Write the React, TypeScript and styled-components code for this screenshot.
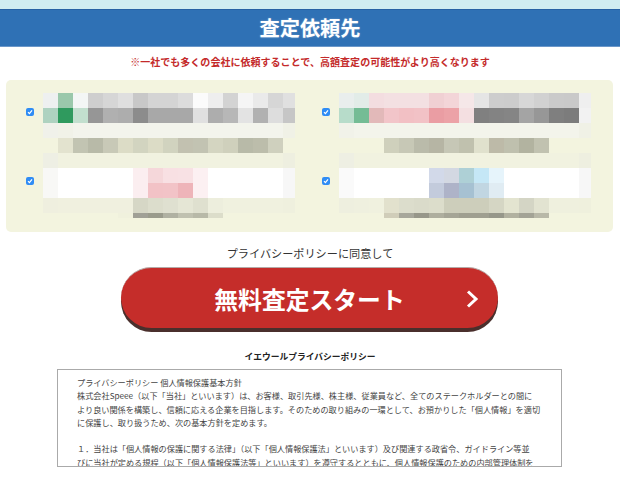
import styled, { createGlobalStyle } from 'styled-components';

const BG = 'f3f4df';
const W = 'ffffff';

const COMPANIES: { checkTop: number; height: number; rows: string[][] }[] = [
  {
    checkTop: 15,
    height: 75,
    rows: [
      ['eef0f0', '9ac8ab', 'f3f6f5', 'cecece', 'd6d6d6', 'dfdfdf', 'c8c8c8', 'd4d4d4', 'd4d4d4', 'dcdcdc', 'fbfbfb', 'eeeeee', 'd3d3d3', 'f5f5f5', 'eaeaea', 'd6d6d6', 'e0e0e0'],
      ['aed2c0', '2f9a5e', 'c2dfce', '969696', 'b0b0b0', 'adadad', '8c8c8c', 'a8a8a8', 'a8a8a8', 'a8a8a8', 'e0e0e0', 'adadad', 'b7b7b7', 'e3e3e3', 'b1b1b1', 'dddddd', 'c6c6c6'],
      ['f0f1ea', 'f1f2e8', 'f3f4ec', 'f3f4ec', 'f3f4ec', 'f3f4ec', 'f3f4ec', 'f3f4ec', 'f3f4ec', 'f3f4ec', 'f3f4ec', 'f3f4ec', 'f3f4ec', 'f3f4ec', 'f3f4ec', 'f3f4ec', 'f0f1e6'],
      [BG, 'e3e3cf', 'c2c4b2', 'b8baa8', 'c8c9b7', 'dcdcc6', 'd2d4c0', 'dcdcc6', 'd1d3bf', 'c2c1b0', 'c2c3b2', 'd4d5c1', 'cfd0bc', 'b8baa8', 'bcbdab', 'cfd0be', BG],
      ['eeefe4', 'f1f2e0', 'f1f2e0', 'f1f2e0', 'f1f2e0', 'f1f2e0', 'f1f2e0', 'f1f2e0', 'f1f2e0', 'f1f2e0', 'f1f2e0', 'f1f2e0', 'f1f2e0', 'f1f2e0', 'f1f2e0', 'f1f2e0', 'eeefe0'],
    ],
  },
  {
    checkTop: 15,
    height: 75,
    rows: [
      ['e9eeed', 'e2ece8', 'f3dde0', 'f3e0e2', 'f3e0e2', 'f3e0e2', 'f0d0d3', 'f3d5d8', 'f5e7e8', 'e5e5e5', 'cdcdcd', 'cccccc', 'd7d7d7', 'd1d1d1', 'cacaca', 'c9c9c9', 'efefef'],
      ['b7dcca', '74bc95', 'e2b9b9', 'f2c5c9', 'f2c0c4', 'f2c2c6', 'ea9da3', 'eca2a7', 'f4dfe1', '808080', '838383', '858585', 'a4a4a4', '979797', '7f7f7f', '7c7c7c', 'f2f2f2'],
      ['f1f2e9', 'f3f4eb', 'f3f4eb', 'f3f4eb', 'f3f4eb', 'f3f4eb', 'f3f4eb', 'f3f4eb', 'f3f4eb', 'f3f4eb', 'f3f4eb', 'f3f4eb', 'f3f4eb', 'f3f4eb', 'f3f4eb', 'f3f4eb', 'f0f1e6'],
      [BG, BG, BG, 'cfd0bc', 'c7c8b6', 'babbaa', 'b6b5a4', 'c6c7b6', 'c0c1ae', 'e0e1cd', 'bdbaa8', 'bfc0ae', 'b2b3a0', 'c1c2b0', BG, BG, BG],
      ['eeefe3', 'f1f2e0', 'f1f2e0', 'f1f2e0', 'f1f2e0', 'f1f2e0', 'f1f2e0', 'f1f2e0', 'f1f2e0', 'f1f2e0', 'f1f2e0', 'f1f2e0', 'f1f2e0', 'f1f2e0', 'f1f2e0', 'f1f2e0', 'eeefe0'],
    ],
  },
  {
    checkTop: 9,
    height: 50,
    rows: [
      ['f8f8f6', W, W, W, W, W, 'fbeef0', 'f5d7da', 'f8e0e3', 'f8e1e4', 'fcf0f2', W, W, W, W, W, 'f7f7f7'],
      ['f8f8f6', W, W, W, W, W, 'fbeef0', 'f2c2c6', 'f2c3c7', 'eeb4b9', 'fcf0f2', W, W, W, W, W, 'f7f7f7'],
      ['efefdf', 'f0f0df', 'f0f0df', 'f0f0df', 'f0f0df', 'f0f0df', 'd6d7c6', 'dcddcc', 'dfe0d0', 'e5e6d5', 'dfe0cf', 'edeedd', 'f0f1df', 'f0f1df', 'f0f1df', 'f0f1df', 'eff0de'],
      [BG, BG, BG, BG, BG, 'f0f1dd', 'a0a096', '9a9b8c', 'b0b1a2', 'c0c1b0', 'b8b9a8', 'dcddca', BG, BG, BG, BG, BG],
    ],
  },
  {
    checkTop: 9,
    height: 50,
    rows: [
      ['fafafa', W, W, W, W, W, 'd2d9e9', 'd3d8e2', 'aed0d6', 'c5e7f6', 'e6f4fb', W, W, W, W, W, 'f7f7f7'],
      ['fafafa', W, W, W, W, W, 'c3cbdc', 'aeb3c8', 'a6c1d2', 'c1d6e2', 'e0ecf3', W, W, W, W, W, 'f7f7f7'],
      ['eeefdf', 'eff0df', 'f0f1df', 'e2e1cd', 'dcddcc', 'dadbca', 'dcddcb', 'cdcebb', 'cdcebb', 'cdcebb', 'd5d6c4', 'e3e4d0', 'd4d5c5', 'e2e3d1', 'eff0de', 'eff0de', 'eff0dd'],
      [BG, BG, BG, 'd0cdb9', 'a7a79b', '97978a', 'aeae9e', 'a5a596', '9f9f90', '9f9f90', '96978a', 'b1b1a0', 'a3a396', 'b8b8a8', BG, BG, BG],
    ],
  },
];

const POLICY: string[][] = [
  [
    'プライバシーポリシー 個人情報保護基本方針',
    '株式会社Speee（以下「当社」といいます）は、お客様、取引先様、株主様、従業員など、全てのステークホルダーとの間に',
    'より良い関係を構築し、信頼に応える企業を目指します。そのための取り組みの一環として、お預かりした「個人情報」を適切',
    'に保護し、取り扱うため、次の基本方針を定めます。',
  ],
  [
    '１．当社は「個人情報の保護に関する法律」（以下「個人情報保護法」といいます）及び関連する政省令、ガイドライン等並',
    'びに当社が定める規程（以下「個人情報保護法等」といいます）を遵守するとともに、個人情報保護のための内部管理体制を',
  ],
];

const GlobalStyle = createGlobalStyle`
  html, body {
    margin: 0;
    padding: 0;
    background: #fff;
  }
  body {
    font-family: "Noto Sans CJK JP", "Liberation Sans", sans-serif;
    color: #333;
  }
`;

const Page = styled.div`
  width: 620px;
  height: 487px;
  overflow: hidden;
`;

const TopBand = styled.div`
  height: 9px;
  background: #d0edf1;
`;

const Header = styled.h1`
  margin: 0;
  height: 38px;
  box-sizing: border-box;
  border-top: 1px solid #2762a4;
  border-bottom: 1px solid #6b97c9;
  background: #2f71b5;
  color: #fff;
  font-size: 20.2px;
  font-weight: 700;
  line-height: 35px;
  text-align: center;
  text-shadow: 0 0 2px rgba(255, 255, 255, 0.35);
`;

const Note = styled.p`
  margin: 8px 0 11px;
  color: #c42a2a;
  font-size: 10.04px;
  font-weight: 700;
  line-height: 14px;
  text-align: center;
`;

const Panel = styled.div`
  display: grid;
  grid-template-columns: 269px 269px;
  column-gap: 27px;
  align-content: start;
  width: 607px;
  height: 152px;
  box-sizing: border-box;
  margin-left: 6px;
  padding: 13px 0 0 20px;
  border-radius: 5px;
  background: #f3f4df;
`;

const Company = styled.label`
  display: flex;
  align-items: flex-start;
  gap: 9px;
`;

const Check = styled.span<{ $top: number }>`
  display: flex;
  align-items: center;
  justify-content: center;
  flex: none;
  width: 8px;
  height: 8px;
  margin-top: ${(p) => p.$top}px;
  border-radius: 2px;
  background: #2f8cf5;
`;

const Mosaic = styled.div<{ $height: number }>`
  display: grid;
  grid-template-columns: repeat(16, 15px) 12px;
  grid-auto-rows: 15px;
  width: 252px;
  height: ${(p) => p.$height}px;
  overflow: hidden;
`;

const Cell = styled.div<{ $color: string }>`
  background: #${(p) => p.$color};
`;

const Agree = styled.p`
  margin: 14px 0 7px;
  color: #333;
  font-size: 11.15px;
  line-height: 14px;
  text-align: center;
`;

const StartButton = styled.button`
  position: relative;
  display: block;
  width: 377px;
  height: 61px;
  box-sizing: border-box;
  margin: 0 0 0 121px;
  padding: 0;
  border: none;
  border-top: 1px solid #b5aaa8;
  border-radius: 31px;
  background: #c52d2a;
  box-shadow: 0 4px 0 #4a2f2c;
  color: #fff;
  font-family: inherit;
  font-size: 23.8px;
  font-weight: 700;
  line-height: 59px;
  text-align: center;
`;

const Chevron = styled.svg`
  position: absolute;
  top: 22px;
  right: 17px;
  width: 16px;
  height: 18px;
`;

const PolicyTitle = styled.h2`
  margin: 22px 0 5px;
  color: #222;
  font-size: 8.75px;
  font-weight: 700;
  line-height: 14px;
  text-align: center;
`;

const PolicyBox = styled.div`
  width: 505px;
  height: 98px;
  box-sizing: border-box;
  margin-left: 57px;
  padding: 6px 0 0 19px;
  border: 1px solid #aaa;
  overflow: hidden;
`;

const PolicyBlock = styled.div`
  margin-bottom: 13.25px;
`;

const PolicyLine = styled.div`
  color: #444;
  font-size: 8.16px;
  line-height: 13.25px;
  white-space: nowrap;
`;

export default function App() {
  return (
    <Page>
      <GlobalStyle />
      <TopBand />
      <Header>査定依頼先</Header>
      <Note>※一社でも多くの会社に依頼することで、高額査定の可能性がより高くなります</Note>
      <Panel>
        {COMPANIES.map((company, i) => (
          <Company key={i}>
            <Check $top={company.checkTop}>
              <svg width="6" height="6" viewBox="0 0 6 6">
                <path d="M1 3.2 2.4 4.6 5 1.4" fill="none" stroke="#fff" strokeWidth="1.2" />
              </svg>
            </Check>
            <Mosaic $height={company.height}>
              {company.rows.flat().map((color, j) => (
                <Cell key={j} $color={color} />
              ))}
            </Mosaic>
          </Company>
        ))}
      </Panel>
      <Agree>プライバシーポリシーに同意して</Agree>
      <StartButton type="button">
        無料査定スタート
        <Chevron viewBox="0 0 16 18">
          <path d="M3 1.5 11 9 3 16.5" fill="none" stroke="#fff" strokeWidth="3" />
        </Chevron>
      </StartButton>
      <PolicyTitle>イエウールプライバシーポリシー</PolicyTitle>
      <PolicyBox>
        {POLICY.map((block, i) => (
          <PolicyBlock key={i}>
            {block.map((line, j) => (
              <PolicyLine key={j}>{line}</PolicyLine>
            ))}
          </PolicyBlock>
        ))}
      </PolicyBox>
    </Page>
  );
}
